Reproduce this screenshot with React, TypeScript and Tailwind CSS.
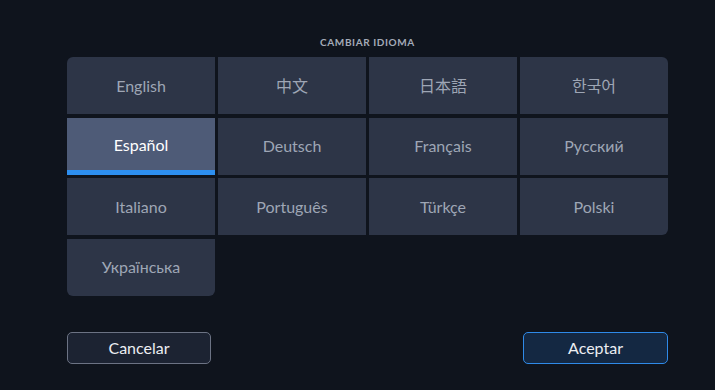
const languages = [
  "English",
  "中文",
  "日本語",
  "한국어",
  "Español",
  "Deutsch",
  "Français",
  "Русский",
  "Italiano",
  "Português",
  "Türkçe",
  "Polski",
  "Українська",
]

const corners: Record<number, string> = {
  0: "rounded-tl-[6px]",
  3: "rounded-tr-[6px]",
  11: "rounded-br-[6px]",
  12: "rounded-b-[6px]",
}

export default function App() {
  const selected = 4
  return (
    <div
      className="flex h-[390px] w-[715px] flex-col items-center bg-[#0f141d] pl-[20px]"
      style={{ fontFamily: "Lato, 'Noto Sans CJK SC', 'Noto Sans CJK KR', sans-serif" }}
    >
      <p className="mt-[35px] text-[10px] font-bold uppercase tracking-[0.06em] text-[#a4abb8]">
        Cambiar idioma
      </p>

      <div className="mt-[7px] grid w-[601px] grid-cols-4 gap-x-[3px] gap-y-[3.5px]">
        {languages.map((lang, i) => {
          const active = i === selected
          return (
            <button
              key={lang}
              className={
                "relative flex h-[57px] items-center justify-center overflow-hidden text-[16px] " +
                (active ? "bg-[#4e5b77] text-white " : "bg-[#2d3547] text-[#9ea6b5] ") +
                (corners[i] ?? "")
              }
            >
              <span className={active ? "-mt-[3px]" : ""}>{lang}</span>
              {active && <span className="absolute inset-x-0 bottom-0 h-[5px] bg-[#2d8ff0]" />}
            </button>
          )
        })}
      </div>

      <div className="mt-auto mb-[26px] flex w-[601px] justify-between">
        <button className="h-[32px] w-[144px] rounded-[5px] border-[1.5px] border-[#6c7384] bg-[#1c2332] text-[16px] text-[#eceef2]">
          Cancelar
        </button>
        <button className="h-[32px] w-[145px] rounded-[5px] border-[1.5px] border-[#2f8ae8] bg-[#142842] text-[16px] text-[#eceef2]">
          Aceptar
        </button>
      </div>
    </div>
  )
}
